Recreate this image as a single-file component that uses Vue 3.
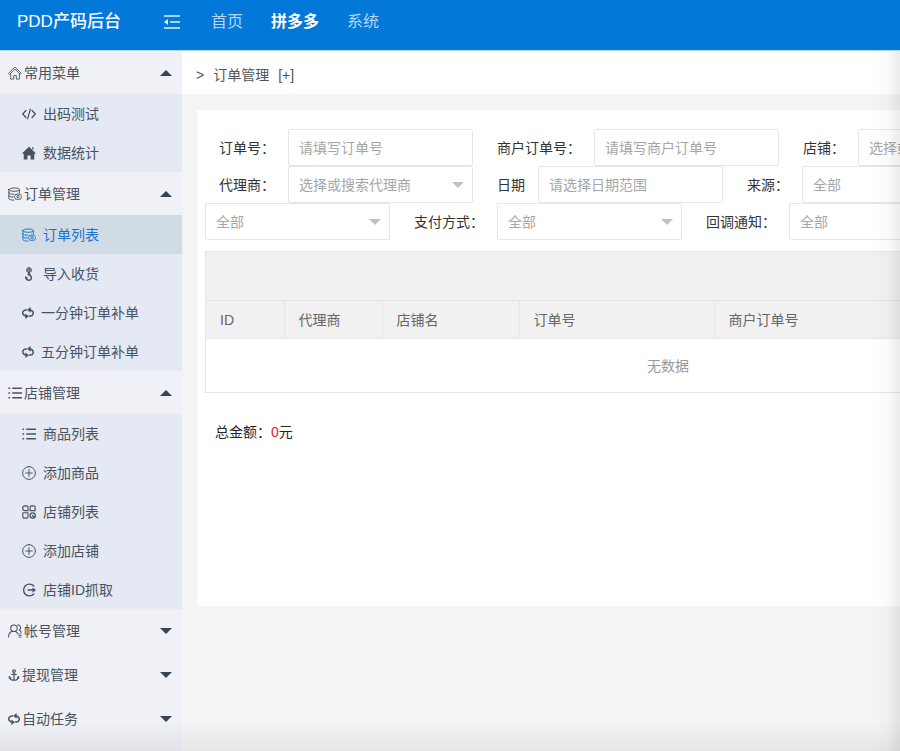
<template>
  <div class="layout">
    <header class="header">
      <div class="logo">PDD产码后台</div>
      <button class="fold" type="button" aria-label="收起菜单">
        <svg viewBox="0 0 18 16" width="18" height="16">
          <path d="M1 2h16M7 8h10M1 14h16" fill="none" stroke="currentColor" stroke-width="1.7" />
          <path d="M5 5v6L1 8z" fill="currentColor" />
        </svg>
      </button>
      <nav class="nav">
        <a
          v-for="item in topMenus"
          :key="item"
          href="#"
          :class="{ active: item === activeTop }"
          @click.prevent="activeTop = item"
        >{{ item }}</a>
      </nav>
    </header>

    <div class="body">
      <aside class="sidebar">
        <div v-for="group in menus" :key="group.name" class="group" :class="{ open: group.open }">
          <button class="group-title" type="button" @click="group.open = !group.open">
            <svg class="icon" :class="{ narrow: narrowIcons.includes(group.icon) }" viewBox="0 0 16 16">
              <path v-for="(p, i) in icons[group.icon]" :key="i" v-bind="p" />
            </svg>
            <span>{{ group.name }}</span>
            <i class="caret"></i>
          </button>
          <ul v-if="group.open && group.children.length">
            <li v-for="child in group.children" :key="child.name">
              <a href="#" :class="{ active: child.name === activeMenu }" @click.prevent="activeMenu = child.name">
                <svg class="icon" :class="{ narrow: narrowIcons.includes(child.icon) }" viewBox="0 0 16 16">
                  <path v-for="(p, i) in icons[child.icon]" :key="i" v-bind="p" />
                </svg>
                <span>{{ child.name }}</span>
              </a>
            </li>
          </ul>
        </div>
      </aside>

      <main class="main">
        <div class="breadcrumb">
          <span>&gt;</span>
          <span>订单管理</span>
          <a href="#" @click.prevent>[+]</a>
        </div>

        <section class="card">
          <form class="filters" @submit.prevent>
            <div v-for="(row, r) in filterRows" :key="r" class="filter-row">
              <div v-for="field in row" :key="field.id" class="field">
                <label v-if="field.label" :for="field.id">{{ field.label }}</label>
                <div v-if="field.type === 'select'" class="select">
                  <select :id="field.id" :aria-label="field.label || '订单状态'">
                    <option>{{ field.text }}</option>
                  </select>
                </div>
                <input v-else :id="field.id" type="text" :placeholder="field.text" />
              </div>
            </div>
          </form>

          <div class="table-box">
            <div class="toolbar"></div>
            <table>
              <colgroup>
                <col v-for="col in columns" :key="col.name" :style="{ width: col.width + 'px' }" />
              </colgroup>
              <thead>
                <tr>
                  <th v-for="col in columns" :key="col.name">{{ col.name }}</th>
                </tr>
              </thead>
              <tbody>
                <tr>
                  <td class="empty" :colspan="columns.length">无数据</td>
                </tr>
              </tbody>
            </table>
          </div>

          <p class="total">总金额：<em>{{ total }}</em>元</p>
        </section>
      </main>
      <div class="shade"></div>
    </div>
  </div>
</template>

<script setup>
import { reactive, ref } from "vue";

const topMenus = ["首页", "拼多多", "系统"];
const activeTop = ref("拼多多");
const activeMenu = ref("订单列表");
const total = ref(0);

const menus = reactive([
  {
    name: "常用菜单",
    icon: "home",
    open: true,
    children: [
      { name: "出码测试", icon: "code" },
      { name: "数据统计", icon: "homeSolid" },
    ],
  },
  {
    name: "订单管理",
    icon: "database",
    open: true,
    children: [
      { name: "订单列表", icon: "database" },
      { name: "导入收货", icon: "hook" },
      { name: "一分钟订单补单", icon: "sync" },
      { name: "五分钟订单补单", icon: "sync" },
    ],
  },
  {
    name: "店铺管理",
    icon: "list",
    open: true,
    children: [
      { name: "商品列表", icon: "list" },
      { name: "添加商品", icon: "add" },
      { name: "店铺列表", icon: "grid" },
      { name: "添加店铺", icon: "add" },
      { name: "店铺ID抓取", icon: "fetch" },
    ],
  },
  { name: "帐号管理", icon: "users", open: false, children: [] },
  { name: "提现管理", icon: "anchor", open: false, children: [] },
  { name: "自动任务", icon: "sync", open: false, children: [] },
]);

const line = (d, width = 1) => ({
  d,
  fill: "none",
  stroke: "currentColor",
  "stroke-width": width,
  "stroke-linecap": "round",
  "stroke-linejoin": "round",
});
const solid = (d) => ({ d, fill: "currentColor" });

// These glyphs take less room than the others
const narrowIcons = ["sync", "anchor"];

const icons = {
  home: [
    line("M.8 8.2 8 1.2l7.2 7-1.2 1.2L8 3.6 2 9.4z", 1),
    line("M3 9v6h3.5v-4h3v4H13V9", 1),
  ],
  homeSolid: [solid("M8 .8 15.5 8l-.8 1H14v6.5H9.8v-4.6H6.2v4.6H2V9h-.7l-.8-1zM11.5 1.5H13v3l-1.5-1.4z")],
  code: [line("M4.5 4 .8 8l3.7 4M11.5 4l3.7 4-3.7 4M9.6 2.5 6.4 13.5", 1.4)],
  database: [
    line("M1 3c0-2.6 12-2.6 12 0S1 5.600 1 3zM1 3v10c0 1.300 2.500 2 5.500 2M13 3v4M1 6.300c0 1.400 3 2 6 2M1 9.700c0 1.300 2.500 1.800 5 1.800", 1.1),
    line("M11.500 7.600l1.300.9 1.600-.1.5 1.600 1 1.200-1 1.200-.5 1.600-1.600-.1-1.300.9-1.300-.9-1.600.1-.5-1.600-1-1.200 1-1.200.5-1.600 1.600.1z", 1),
    line("M11.500 9.800a1.400 1.400 0 1 1 0 2.800 1.400 1.400 0 0 1 0-2.800z", 1),
  ],
  hook: [
    line("M8 .7a2.800 2.800 0 1 1 0 5.600A2.800 2.800 0 0 1 8 .7zM5.500 2.500h5M5.500 4.500h5M8 .5v6", 1),
    line("M8 6.500v2.800c3.800 1 3.600 5.700 0 5.900-2 0-3.300-1-3.500-2.700", 1.7),
    solid("M3.500 10.200 7.300 12.500l-3.500 1.200zM6.300 7.500h3.400V9H6.300z"),
  ],
  sync: [
    line("M6 4H4.800a3.800 3.800 0 0 0-2 7L5 12.200M10 12h1.200a3.800 3.800 0 0 0 2-7L11 3.800", 2),
    solid("M4.500 8.500 9.200 12.200 4.500 16zM11.500 0 6.800 3.800l4.700 3.700z"),
  ],
  list: [
    line("M5.500 2.500h10M5.500 8h10M5.500 13.500h10", 1.7),
    solid("M.5 1.600h1.900v1.800H.5zM.5 7.100h1.900v1.800H.5zM.5 12.600h1.900v1.800H.5z"),
  ],
  add: [line("M8 .7a7.300 7.300 0 1 1 0 14.600A7.300 7.300 0 0 1 8 .7zM8 4.300v7.400M4.300 8h7.400", 1.1)],
  grid: [
    line("M3.500 1H5.500a1.300 1.300 0 0 1 1.300 1.300v4.200H3.500a2.700 2.700 0 0 1 0-5.500zM10.500 1h3a1.500 1.500 0 0 1 1.500 1.500v4H9.300V2.200A1.200 1.200 0 0 1 10.500 1zM1 8.800h5.800v4.700A1.500 1.500 0 0 1 5.300 15H2.500A1.500 1.500 0 0 1 1 13.500z", 1.3),
    line("M12.200 9a3 3 0 1 1 0 6 3 3 0 0 1 0-6zM12 12l2.500 2.700", 1.4),
  ],
  fetch: [
    line("M13.500 3.500A6.700 6.700 0 1 0 13.500 12.500M7 8h7", 1.6),
    solid("M12 5l4 3-4 3z"),
  ],
  users: [
    line("M6.800 1.200a3.700 3.700 0 1 1 0 7.400 3.700 3.700 0 0 1 0-7.400zM.7 14.800c.1-4 2.300-6 4.300-6.500M8.800 8.500c1.500.7 2.200 1.800 2.500 3", 1.2),
    line("M11.300 1c3 .1 4.200 4 1.700 5.800 1.200.7 1.800 1.500 2 2.700", 1.2),
    line("M12.500 11.500h2.500M12.500 13.200h2.500M12.500 15h2.500", 0.9),
  ],
  anchor: [
    line("M8 1a1.700 1.700 0 1 1 0 3.400A1.700 1.700 0 0 1 8 1zM8 4.500V15M5 7.200h6M2 10.500c.5 3 3 4.500 6 4.500s5.500-1.500 6-4.500", 1.6),
    solid("M1 9.200 4.800 11.500 1 13zM15 9.200 11.200 11.500 15 13z"),
  ],
};

const filterRows = [
  [
    { id: "order-no", label: "订单号：", type: "input", text: "请填写订单号" },
    { id: "merchant-no", label: "商户订单号：", type: "input", text: "请填写商户订单号" },
    { id: "shop", label: "店铺：", type: "select", text: "选择或搜索店铺" },
  ],
  [
    { id: "agent", label: "代理商：", type: "select", text: "选择或搜索代理商" },
    { id: "date", label: "日期", type: "input", text: "请选择日期范围" },
    { id: "source", label: "来源：", type: "select", text: "全部" },
  ],
  [
    { id: "status", label: "", type: "select", text: "全部" },
    { id: "pay-type", label: "支付方式：", type: "select", text: "全部" },
    { id: "notify", label: "回调通知：", type: "select", text: "全部" },
  ],
];

const columns = [
  { name: "ID", width: 78 },
  { name: "代理商", width: 98 },
  { name: "店铺名", width: 137 },
  { name: "订单号", width: 195 },
  { name: "商户订单号", width: 416 },
];
</script>

<style>
body {
  margin: 0;
}
</style>

<style scoped>
.layout {
  display: flex;
  flex-direction: column;
  min-height: 100vh;
  overflow: hidden;
  font-family: "Liberation Sans", "Noto Sans CJK SC", sans-serif;
  font-size: 14px;
  line-height: 20px;
  color: #333;
  background: #f4f4f4;
}

button,
input,
select {
  font: inherit;
}

a {
  color: inherit;
  text-decoration: none;
}

/* Header */
.header {
  display: flex;
  box-sizing: border-box;
  height: 51px;
  padding-bottom: 7px;
  align-items: center;
  color: #fff;
  background: #0278d9;
  border-bottom: 1px solid #b5d8f5;
}

.logo {
  width: 146px;
  padding-left: 17px;
  font-size: 17px;
  font-weight: 500;
}

.fold {
  display: flex;
  padding: 0;
  border: 0;
  color: #e3f1fc;
  background: none;
}

.nav {
  display: flex;
  gap: 28px;
  margin-left: 30px;
  font-size: 16px;
  color: #b5d7f4;
}

.nav .active {
  color: #fff;
  font-weight: 700;
}

.body {
  position: relative;
  display: flex;
  flex: 1;
}

/* Side menu */
.sidebar {
  flex: 0 0 182px;
  color: #485260;
  background: #f0f1f6;
}

.group-title {
  display: flex;
  align-items: center;
  gap: 2px;
  width: 100%;
  height: 44px;
  padding: 0 10px 0 8px;
  border: 0;
  color: inherit;
  background: none;
}

.open .group-title {
  height: 43px;
}

.icon {
  flex: none;
  width: 14px;
  height: 14px;
}

.icon.narrow {
  width: 12px;
  height: 12px;
}

.caret {
  margin-left: auto;
  border: 6px solid transparent;
  border-top-color: #364256;
  border-bottom-width: 0;
}

.open .caret {
  border-top-width: 0;
  border-bottom: 6px solid #364256;
}

.sidebar ul {
  margin: 0;
  padding: 0;
  list-style: none;
  background: #e4e9f3;
}

.sidebar li a {
  display: flex;
  align-items: center;
  gap: 7px;
  height: 39px;
  padding-left: 22px;
}

.sidebar li a.active {
  color: #1c73ca;
  background: #d0dbe6;
}

/* Content */
.main {
  flex: 1;
  min-width: 0;
}

.breadcrumb {
  display: flex;
  align-items: center;
  gap: 9px;
  height: 43px;
  padding: 5px 14px 0;
  box-sizing: border-box;
  color: #555;
  background: #fff;
}

.card {
  box-sizing: border-box;
  min-height: 66vh;
  margin: 16px 0 0 15px;
  padding: 19px 0 0 8px;
  overflow: hidden;
  background: #fff;
}

.filter-row {
  display: flex;
  gap: 10px;
}

.field {
  display: flex;
  flex: none;
  align-items: center;
}

.field label {
  padding: 0 13px 0 14px;
}

.select {
  position: relative;
}

.select::after {
  content: "";
  position: absolute;
  top: 16px;
  right: 9px;
  border: 6px solid transparent;
  border-top-color: #c2c2c2;
  border-bottom-width: 0;
  pointer-events: none;
}

.field input,
.field select {
  display: block;
  box-sizing: border-box;
  width: 185px;
  height: 37px;
  padding: 0 10px;
  border: 1px solid #e6e6e6;
  border-radius: 2px;
  color: #a6a6a6;
  background: #fff;
  appearance: none;
}

.field input::placeholder {
  color: #a6a6a6;
}

.table-box {
  width: max-content;
  margin-top: 11px;
  border: 1px solid #e6e6e6;
}

.toolbar {
  height: 48px;
  background: #f1f1f1;
}

table {
  width: 924px;
  table-layout: fixed;
  border-collapse: collapse;
}

th {
  height: 37px;
  padding: 0 14px;
  border: 1px solid #e6e6e6;
  border-left: 0;
  font-weight: 400;
  text-align: left;
  color: #666;
  background: #f1f1f1;
}

.empty {
  height: 53px;
  padding: 0;
  text-align: center;
  color: #999;
}

.total {
  margin: 29px 10px;
  color: #222;
}

.total em {
  font-style: normal;
  color: #e02020;
}

/* Soft shading along the window edges */
.shade {
  position: absolute;
  inset: 0;
  pointer-events: none;
  background:
    linear-gradient(to left, rgba(0, 0, 0, 0.08), rgba(0, 0, 0, 0.02) 12px, transparent 28px),
    linear-gradient(to top, rgba(0, 0, 0, 0.06), transparent 30px);
}
</style>
